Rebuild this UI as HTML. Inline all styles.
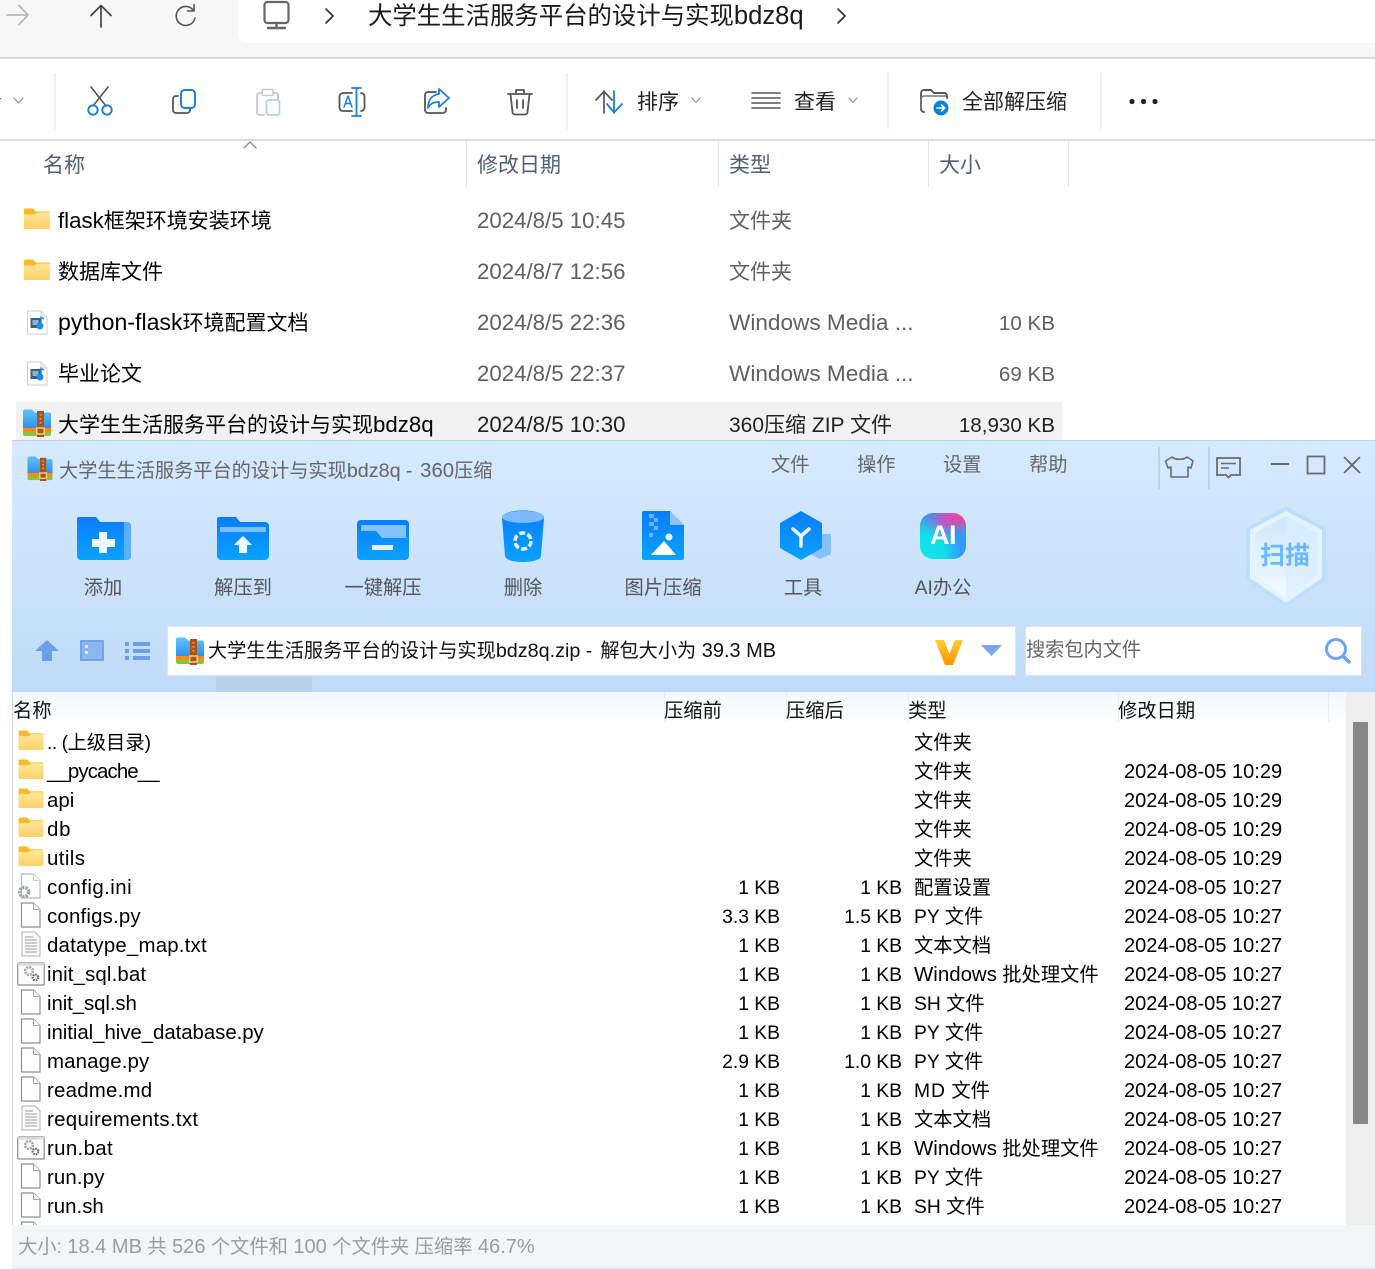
<!DOCTYPE html>
<html lang="zh-CN"><head><meta charset="utf-8"><title>360压缩</title>
<style>
html,body{margin:0;padding:0;width:1375px;height:1269px;overflow:hidden;background:#fff}
body{position:relative;font-family:"Liberation Sans","Noto Sans CJK SC",sans-serif;color:#111}
div,span{position:absolute;white-space:nowrap}
svg{position:absolute;overflow:visible}
i{font-style:normal;font-size:1.06em}
.e{height:38px;left:0;width:1100px;font-size:21px;line-height:38px}
.e span{line-height:38px;color:#606060}
.e .n{left:58px;color:#000}.e .d{left:477px;top:-1px;font-size:22.25px}.e .k{left:729px}.e .s{right:45px;font-size:20.6px}
.h{top:148px;font-size:21px;line-height:36px;color:#4f5f75}
.vs{width:1px;top:141px;height:46px;background:#e5e5e5}
.ts{top:73px;width:2px;height:56px;background:#eee}
.tb{top:85px;font-size:21px;line-height:36px;color:#222}
.lab{top:574px;font-size:19.3px;line-height:30px;color:#555;text-align:center;width:120px}
.menu{top:451px;font-size:19.3px;line-height:30px;color:#666}
.ch{top:697px;font-size:19.3px;line-height:30px;color:#111}
.cs{top:692px;width:1px;height:30px;background:#e6eff9}
.r{left:0;width:1375px;height:29px;font-size:19.3px;line-height:29px;color:#000}
.r span{line-height:29px}
.r .n{left:47px;top:-1px;font-size:20.45px}.r .a{right:595px}.r .b{right:473px}.r .k{left:914px}.r .d{left:1124px;font-size:20.05px}
</style></head>
<body>
<div style="left:0;top:0;width:1375px;height:57px;background:#f7f7f7"></div>
<div style="left:238px;top:0;width:1137px;height:43px;background:#fff;border-bottom-left-radius:8px"></div>
<div style="left:0;top:57px;width:1375px;height:2px;background:#d9d9d9"></div>
<div style="left:0;top:139px;width:1375px;height:2px;background:#dcdcdc"></div>
<span style="left:368px;top:0;font-size:24.4px;line-height:32px;color:#1a1a1a">大学生生活服务平台的设计与实现<i style="font-size:1.05em">bdz8q</i></span>

<div class="ts" style="left:54px"></div><div class="ts" style="left:566px"></div><div class="ts" style="left:887px"></div><div class="ts" style="left:1100px"></div>
<span class="tb" style="left:-40px">查看</span>
<span class="tb" style="left:637px">排序</span><span class="tb" style="left:794px">查看</span><span class="tb" style="left:962px">全部解压缩</span>

<div class="vs" style="left:466px"></div><div class="vs" style="left:718px"></div><div class="vs" style="left:928px"></div><div class="vs" style="left:1068px"></div>
<span class="h" style="left:43px">名称</span><span class="h" style="left:477px">修改日期</span><span class="h" style="left:729px">类型</span><span class="h" style="left:939px">大小</span>

<div style="left:16px;top:402px;width:1046px;height:38px;background:#f2f2f2"></div>
<div class="e" style="top:203px"><span class="n" style="top:-1px"><i>flask</i>框架环境安装环境</span><span class="d">2024/8/5 10:45</span><span class="k">文件夹</span></div>
<div class="e" style="top:254px"><span class="n">数据库文件</span><span class="d">2024/8/7 12:56</span><span class="k">文件夹</span></div>
<div class="e" style="top:305px"><span class="n" style="top:-2px"><i style="font-size:1.1em">python-flask</i>环境配置文档</span><span class="d">2024/8/5 22:36</span><span class="k" style="font-size:22.6px;top:-1px">Windows Media ...</span><span class="s">10 KB</span></div>
<div class="e" style="top:356px"><span class="n">毕业论文</span><span class="d">2024/8/5 22:37</span><span class="k" style="font-size:22.6px;top:-1px">Windows Media ...</span><span class="s">69 KB</span></div>
<div class="e" style="top:407px"><span class="n" style="top:-1px"><span style="position:static;color:#000">大学生生活服务平台的设计与实现</span><i>bdz8q</i></span><span class="d" style="color:#222">2024/8/5 10:30</span><span class="k" style="color:#222">360压缩 ZIP 文件</span><span class="s" style="color:#222">18,930 KB</span></div>

<!-- 360 window -->
<div style="left:12px;top:440px;width:1363px;height:829px;background:#fff;border-left:1px solid #c3daf3;box-sizing:border-box"></div>
<div style="left:12px;top:440px;width:1363px;height:252px;background:linear-gradient(#d6eaff,#c0dbf8);border-top:1px solid #b9d5f2;box-sizing:border-box"></div>
<div style="left:216px;top:676px;width:96px;height:16px;background:#b8d2ee"></div>
<span style="left:59px;top:456px;font-size:19.2px;line-height:30px;color:#666">大学生生活服务平台的设计与实现<i style="font-size:1.03em">bdz8q</i> <b style="font-weight:normal;letter-spacing:1.2px">- </b><i>360</i>压缩</span>
<span class="menu" style="left:771px">文件</span><span class="menu" style="left:857px">操作</span><span class="menu" style="left:943px">设置</span><span class="menu" style="left:1029px">帮助</span>
<div style="left:1158px;top:447px;width:2px;height:42px;background:#b9d3ee"></div>
<div style="left:1208px;top:447px;width:2px;height:42px;background:#b9d3ee"></div>

<span class="lab" style="left:43px">添加</span><span class="lab" style="left:183px">解压到</span><span class="lab" style="left:323px">一键解压</span><span class="lab" style="left:463px">删除</span><span class="lab" style="left:603px">图片压缩</span><span class="lab" style="left:743px">工具</span><span class="lab" style="left:883px">AI办公</span>

<div style="left:920px;top:513px;width:46px;height:46px;border-radius:13px;background:radial-gradient(circle at 8% 90%,#12e4e6 0,#12dfe8 35%,transparent 62%),radial-gradient(circle at 90% 85%,#2c9cf6 0,#2c9cf6 30%,transparent 60%),radial-gradient(circle at 90% 25%,#f0468f 0,transparent 55%),linear-gradient(120deg,#2aa0e8,#d843dc 60%,#e946b0)"></div>
<span style="left:920px;top:519px;width:46px;text-align:center;font-size:27px;line-height:32px;font-weight:bold;color:#fff;letter-spacing:-.5px">AI</span>

<svg width="1375" height="1269" style="left:0;top:0" viewBox="0 0 1375 1269">
<defs>
<linearGradient id="bl" x1="0" y1="0" x2="0" y2="1"><stop offset="0" stop-color="#0a7cfb"/><stop offset="1" stop-color="#0aa2ff"/></linearGradient>
<linearGradient id="yl" x1="0" y1="0" x2="0" y2="1"><stop offset="0" stop-color="#fee79b"/><stop offset="1" stop-color="#fdd266"/></linearGradient>
<linearGradient id="zb" x1="0" y1="0" x2="0" y2="1"><stop offset="0" stop-color="#60c4fd"/><stop offset="1" stop-color="#2f8ee6"/></linearGradient>
<linearGradient id="vv" x1="0" y1="0" x2="0" y2="1"><stop offset="0" stop-color="#ffcc33"/><stop offset="1" stop-color="#ff9300"/></linearGradient>
<linearGradient id="sh" x1="0" y1="0" x2="0" y2="1"><stop offset="0" stop-color="#cfe8fd"/><stop offset="1" stop-color="#f2faff"/></linearGradient>
<symbol id="fold" viewBox="0 0 26 21" overflow="visible"><path d="M0 2a1.500 1.500 0 0 1 1.500-1.500H9l3 3h12.500A1.500 1.500 0 0 1 26 5v14.500a1.500 1.500 0 0 1-1.500 1.500H1.500A1.500 1.500 0 0 1 0 19.500z" fill="#fab92c"/><path d="M0 6.500h10.500l2.500-2h11.500A1.500 1.500 0 0 1 26 6v13.500a1.500 1.500 0 0 1-1.500 1.500H1.500A1.500 1.500 0 0 1 0 19.500z" fill="url(#yl)"/></symbol>
<symbol id="zip" viewBox="0 0 28 28" overflow="visible"><path d="M0 2.500A2 2 0 0 1 2 .5h7l3 3h14a2 2 0 0 1 2 2V20H0z" fill="url(#zb)"/><rect x="0" y="19" width="28" height="4" fill="#ff8a12"/><path d="M0 23h28v2a2 2 0 0 1-2 2H2a2 2 0 0 1-2-2z" fill="#8ac43e"/><rect x="14" y="2" width="7" height="26" fill="#a8541a"/><rect x="16.500" y="5" width="2" height="1.600" fill="#e3a15a"/><rect x="16.500" y="9" width="2" height="1.600" fill="#e3a15a"/><rect x="16.500" y="13" width="2" height="1.600" fill="#e3a15a"/><rect x="13.800" y="19" width="7.400" height="6" fill="none" stroke="#f6d27c" stroke-width="1.500"/></symbol>
<symbol id="page" viewBox="0 0 21 26" overflow="visible"><path d="M1.500 1H13.500L20 7.500V25H1.500z" fill="#fff" stroke="#8f8f8f" stroke-width="1.200"/><path d="M13.500 1V7.500H20" fill="#fafafa" stroke="#a8a8a8" stroke-width="1"/></symbol>
<symbol id="txt" viewBox="0 0 20 26" overflow="visible"><path d="M1 1H14L19 6V25H1z" fill="#fbfbfb" stroke="#b0b0b0"/><path d="M4 6H12M4 9H16M4 12H16M4 15H16M4 18H16M4 21H16" stroke="#9a9a9a" stroke-width="1"/></symbol>
<symbol id="bat" viewBox="0 0 28 26" overflow="visible"><rect x=".7" y="1" width="26.500" height="22" rx="1" fill="#fbfbfb" stroke="#8d8d8d" stroke-width="1.200"/><rect x=".7" y="1" width="26.500" height="2.500" fill="#d8d8d8"/><circle cx="12" cy="9" r="3.800" fill="none" stroke="#a5a5a5" stroke-width="2.600" stroke-dasharray="2 1"/><circle cx="18.500" cy="15.500" r="2.800" fill="none" stroke="#6a6a6a" stroke-width="2.200" stroke-dasharray="1.700 .8"/></symbol>
<symbol id="media" viewBox="0 0 22 25" overflow="visible"><path d="M1.500 1H15L21 7V24H1.500z" fill="#fff" stroke="#cfcfcf"/><path d="M15 1V7H21" fill="#f0f0f0" stroke="#cfcfcf"/><rect x="4.500" y="8" width="10" height="10" fill="#3f5f80"/><rect x="6.500" y="10" width="6" height="5" fill="#8cb2d6"/><circle cx="14" cy="16" r="3.500" fill="#1f8ae6"/><path d="M15 15V7.500l3 1.500" stroke="#1f8ae6" stroke-width="1.500" fill="none"/></symbol>
</defs>

<!-- nav -->
<g fill="none" stroke-linecap="round" stroke-linejoin="round">
<path d="M7 16H28M19 6.500L28 16L19 25.500" stroke="#b9b9b9" stroke-width="1.700" transform="translate(0,-1)"/>
<path d="M101 27V6M91 15.500L101 5.500L111 15.500" stroke="#444" stroke-width="1.700"/>
<path d="M193.500 10.500A9.500 9.500 0 1 0 195 18" stroke="#555" stroke-width="1.600"/><path d="M194 4.500V11H187.500" stroke="#555" stroke-width="1.600"/>
<rect x="264.500" y="2" width="24" height="21" rx="3" stroke="#666" stroke-width="2.200"/><path d="M276.500 23V27M268 28H285" stroke="#666" stroke-width="2.400"/>
<path d="M326 9L333 16L326 23" stroke="#333" stroke-width="1.700"/>
<path d="M838 9L845 16L838 23" stroke="#333" stroke-width="1.700"/>
<!-- chevron indicators -->
<path d="M14 98L18.500 103L23 98M692 98L696 102.500L700 98M849 98L853 102.500L857 98" stroke="#999" stroke-width="1.300"/>
<path d="M244 148L250 142L256 148" stroke="#888" stroke-width="1.300"/>
<!-- cut -->
<path d="M91 87L106 106M108 87L93 106" stroke="#555" stroke-width="1.600"/>
<circle cx="93" cy="110" r="4.700" stroke="#1a7fd6" stroke-width="1.900"/><circle cx="107" cy="110" r="4.700" stroke="#1a7fd6" stroke-width="1.900"/>
<!-- copy -->
<path d="M178 96h-2a3 3 0 0 0-3 3v11a3 3 0 0 0 3 3h11a3 3 0 0 0 3-3v-1" stroke="#555" stroke-width="1.800"/>
<rect x="181" y="90" width="14" height="18" rx="3.500" stroke="#1a7fd6" stroke-width="1.900"/>
<!-- paste -->
<path d="M262 93h-2a3 3 0 0 0-3 3v16a3 3 0 0 0 3 3h4M274 93h2a2 2 0 0 1 2 2v4" stroke="#c8c8c8" stroke-width="1.800"/><rect x="262" y="89.500" width="11" height="6" rx="1.500" stroke="#c8c8c8" stroke-width="1.500"/>
<rect x="266.500" y="100" width="13" height="15" rx="2" stroke="#a9d2f4" stroke-width="1.700"/>
<!-- rename -->
<path d="M352 93H343a3.500 3.500 0 0 0-3.500 3.500v11a3.500 3.500 0 0 0 3.500 3.500H352M361 93a3.500 3.500 0 0 1 3.500 3.500v11a3.500 3.500 0 0 1-3.500 3.500" stroke="#555" stroke-width="1.800"/>
<path d="M356.500 88V116M352 88H361M352 116H361" stroke="#1a7fd6" stroke-width="1.800"/>
<path d="M344 107L348 96L352 107M345.500 103.500H350.500" stroke="#1a7fd6" stroke-width="1.500"/>
<!-- share -->
<path d="M436 92H428a3 3 0 0 0-3 3v15a3 3 0 0 0 3 3h15a3 3 0 0 0 3-3v-2" stroke="#555" stroke-width="1.800"/>
<path d="M439 89L449 98L439 107V102C433 102 430 104 428 108C428 100 432 95 439 94Z" stroke="#1a7fd6" stroke-width="1.800"/>
<!-- delete -->
<path d="M508 94H532M516 94V90H524V94M510.500 94L512.500 112a2.500 2.500 0 0 0 2.500 2.500H525a2.500 2.500 0 0 0 2.500-2.500L529.500 94M517 100V108M523 100V108" stroke="#555" stroke-width="1.800"/>
<!-- sort -->
<path d="M604 113V91M596 100L604 91.500L612 100" stroke="#555" stroke-width="1.700"/>
<path d="M614 91V113M607 104L614 112.500L622 104" stroke="#1a7fd6" stroke-width="1.800"/>
<!-- view -->
<path d="M752 93H780M752 98H780M752 103H780M752 108H780" stroke="#555" stroke-width="1.600"/>
<!-- extract folder -->
<path d="M924 112a3 3 0 0 1-3-3V93a3 3 0 0 1 3-3h7l3 3h10a3 3 0 0 1 3 3v2" stroke="#555" stroke-width="1.900"/>
<path d="M921 108V99a3 3 0 0 1 3-3H946" stroke="#777" stroke-width="1.400"/>
<circle cx="941" cy="108" r="7.500" fill="#0e7fd8" stroke="none"/><path d="M937 108H944M941.500 105L944.500 108L941.500 111" stroke="#fff" stroke-width="1.600"/>
</g>
<g fill="#222"><circle cx="1132" cy="101.500" r="2.600"/><circle cx="1143.500" cy="101.500" r="2.600"/><circle cx="1155" cy="101.500" r="2.600"/></g>

<!-- explorer row icons -->
<use href="#fold" x="24" y="208" width="26" height="21"/>
<use href="#fold" x="24" y="259" width="26" height="21"/>
<use href="#media" x="26" y="310" width="22" height="25"/>
<use href="#media" x="26" y="361" width="22" height="25"/>
<use href="#zip" x="23" y="409" width="28" height="28"/>

<!-- title zip -->
<use href="#zip" x="26" y="456" width="28" height="25"/>

<!-- window controls -->
<g fill="none" stroke="#6b6b6b">
<path d="M1172 457L1165.500 461L1168 468L1171 467V477H1188V467L1191 468L1193 461L1187 457C1184 460 1175 460 1172 457Z" stroke-width="1.600" stroke-linejoin="round"/>
<path d="M1217 458H1240V475H1231L1228.500 477.500L1226 475H1217Z" stroke-width="1.800"/><path d="M1221 463.500H1236M1221 468H1229" stroke-width="1.500"/>
<path d="M1271 464H1289" stroke-width="2"/>
<rect x="1307.500" y="456.500" width="17" height="17" stroke-width="1.800"/>
<path d="M1344 457L1360 473M1360 457L1344 473" stroke-width="1.900"/>
</g>

<!-- 360 toolbar icons -->
<path d="M79 517H96L100 522H127a4 4 0 0 1 4 4v30a4 4 0 0 1-4 4H81a4 4 0 0 1-4-4V519a2 2 0 0 1 2-2z" fill="url(#bl)"/>
<path d="M124 522h3a4 4 0 0 1 4 4v30a4 4 0 0 1-4 4h-3z" fill="#6fb7fb" opacity=".8"/>
<path d="M99 532H107V539H115V547H107V553H99V547H92V539H99Z" fill="#eef8ff"/>
<path d="M219 517H236L240 522H265a4 4 0 0 1 4 4v30a4 4 0 0 1-4 4H221a4 4 0 0 1-4-4V519a2 2 0 0 1 2-2z" fill="url(#bl)"/>
<rect x="220" y="527" width="46" height="5" fill="#7ac0fd"/>
<path d="M243 536L252 545H247V553H239V545H234Z" fill="#f4fbff"/>
<path d="M361 520H405a4 4 0 0 1 4 4v32a4 4 0 0 1-4 4H361a4 4 0 0 1-4-4V524a4 4 0 0 1 4-4z" fill="url(#bl)"/>
<path d="M361 525H406V538H382L376 531H361Z" fill="#82c3fd"/>
<rect x="372" y="545" width="21" height="5" fill="#dff1ff"/>
<path d="M502 518C502 508 544 508 544 518L541 556C540 564 506 564 505 556Z" fill="url(#bl)"/>
<ellipse cx="523" cy="517" rx="21" ry="6" fill="#7cbcfc"/>
<circle cx="523" cy="541" r="8" fill="none" stroke="#e2f3ff" stroke-width="3.500" stroke-dasharray="6 2.400"/>
<path d="M644 511H670L684 525V558a2 2 0 0 1-2 2H644a2 2 0 0 1-2-2V513a2 2 0 0 1 2-2z" fill="url(#bl)"/>
<path d="M670 511L684 525H670Z" fill="#8cc5fb"/>
<path d="M649 514h5v4h-5zM654 518h4v4h-4zM649 522h5v4h-5zM654 526h4v4h-4zM649 533h4v4h-4z" fill="#6ab5fb"/>
<circle cx="669" cy="537" r="3.500" fill="#e4f4ff"/>
<path d="M651 555L664 541L676 555Z" fill="#fff"/>
<path d="M811 534L831 534V554L820 559L808 553Z" fill="#86c1fb"/>
<path d="M801 511L822 523V548L801 560L780 548V523Z" fill="url(#bl)"/>
<path d="M793 529L801 536L809 529M801 536V546" fill="none" stroke="#eaf7ff" stroke-width="3.500" stroke-linecap="round"/>

<!-- shield -->
<path d="M1286 506L1326 528V580L1286 607L1246 580V528Z" fill="#b9defb" opacity=".85"/>
<path d="M1286 511L1322 530V578L1286 603L1250 578V530Z" fill="#e4f3ff"/>
<path d="M1286 516L1317 533V576L1286 598L1255 576V533Z" fill="url(#sh)"/>
<path d="M1286 516L1317 533V576L1286 598Z" fill="#d8eeff" opacity=".7"/>

<!-- nav row -->
<path d="M47 640L59 651H52V661H42V651H35Z" fill="#6c9fe9"/>
<rect x="81" y="641" width="22" height="19" fill="#8cb6ee" stroke="#6c9fe9" stroke-width="1.800"/>
<rect x="85" y="645" width="3" height="3" fill="#dbe9fa"/><rect x="85" y="651" width="3" height="3" fill="#dbe9fa"/>
<path d="M125 642h4v4h-4zM133 642h17v4h-17zM125 649h4v4h-4zM133 649h17v4h-17zM125 656h4v4h-4zM133 656h17v4h-17z" fill="#6c9fe9"/>
</svg>

<div style="left:167px;top:626px;width:849px;height:50px;background:#fff;border:1px solid #d3e4f7;box-sizing:border-box"></div>
<div style="left:1025px;top:626px;width:337px;height:50px;background:#fff;border:1px solid #d3e4f7;box-sizing:border-box"></div>
<span style="left:208px;top:636px;font-size:19.2px;line-height:30px;color:#111">大学生生活服务平台的设计与实现<i style="font-size:1.03em">bdz8q.zip</i> <b style="font-weight:normal;letter-spacing:1.4px">- </b>解包大小为<i style="font-size:1.04em"> 39.3 MB</i></span>
<span style="left:1026px;top:636px;font-size:19.2px;line-height:30px;color:#666">搜索包内文件</span>

<!-- column header -->
<div style="left:13px;top:692px;width:1333px;height:32px;background:linear-gradient(#f3f8fe,#fff)"></div>
<div class="cs" style="left:664px"></div><div class="cs" style="left:786px"></div><div class="cs" style="left:908px"></div><div class="cs" style="left:1118px"></div><div class="cs" style="left:1328px"></div>
<span class="ch" style="left:13px">名称</span><span class="ch" style="left:664px">压缩前</span><span class="ch" style="left:786px">压缩后</span><span class="ch" style="left:908px">类型</span><span class="ch" style="left:1118px">修改日期</span>

<!-- scrollbar -->
<div style="left:1346px;top:692px;width:29px;height:533px;background:#eee"></div>
<div style="left:1353px;top:722px;width:15px;height:402px;background:#888"></div>

<!-- rows -->
<div class="r" style="top:729px"><span class="n" style="font-size:19.3px;top:0"><b style="font-weight:normal;letter-spacing:-.5px">.. (</b>上级目录)</span><span class="k">文件夹</span></div>
<div class="r" style="top:758px"><span class="n" style="letter-spacing:-.9px">__pycache__</span><span class="k">文件夹</span><span class="d">2024-08-05 10:29</span></div>
<div class="r" style="top:787px"><span class="n">api</span><span class="k">文件夹</span><span class="d">2024-08-05 10:29</span></div>
<div class="r" style="top:816px"><span class="n" style="letter-spacing:.8px">db</span><span class="k">文件夹</span><span class="d">2024-08-05 10:29</span></div>
<div class="r" style="top:845px"><span class="n" style="letter-spacing:.4px">utils</span><span class="k">文件夹</span><span class="d">2024-08-05 10:29</span></div>
<div class="r" style="top:874px"><span class="n" style="letter-spacing:.44px">config.ini</span><span class="a">1 KB</span><span class="b">1 KB</span><span class="k">配置设置</span><span class="d">2024-08-05 10:27</span></div>
<div class="r" style="top:903px"><span class="n" style="letter-spacing:.18px">configs.py</span><span class="a">3.3 KB</span><span class="b">1.5 KB</span><span class="k">PY 文件</span><span class="d">2024-08-05 10:27</span></div>
<div class="r" style="top:932px"><span class="n" style="letter-spacing:.19px">datatype_map.txt</span><span class="a">1 KB</span><span class="b">1 KB</span><span class="k">文本文档</span><span class="d">2024-08-05 10:27</span></div>
<div class="r" style="top:961px"><span class="n" style="letter-spacing:.12px">init_sql.bat</span><span class="a">1 KB</span><span class="b">1 KB</span><span class="k" style="top:-1px"><i>Windows</i> 批处理文件</span><span class="d">2024-08-05 10:27</span></div>
<div class="r" style="top:990px"><span class="n" style="letter-spacing:-.1px">init_sql.sh</span><span class="a">1 KB</span><span class="b">1 KB</span><span class="k">SH 文件</span><span class="d">2024-08-05 10:27</span></div>
<div class="r" style="top:1019px"><span class="n" style="letter-spacing:-.06px">initial_hive_database.py</span><span class="a">1 KB</span><span class="b">1 KB</span><span class="k">PY 文件</span><span class="d">2024-08-05 10:27</span></div>
<div class="r" style="top:1048px"><span class="n" style="letter-spacing:.14px">manage.py</span><span class="a">2.9 KB</span><span class="b">1.0 KB</span><span class="k">PY 文件</span><span class="d">2024-08-05 10:27</span></div>
<div class="r" style="top:1077px"><span class="n" style="letter-spacing:.22px">readme.md</span><span class="a">1 KB</span><span class="b">1 KB</span><span class="k"><b style="font-weight:normal;letter-spacing:1px">MD</b> 文件</span><span class="d">2024-08-05 10:27</span></div>
<div class="r" style="top:1106px"><span class="n" style="letter-spacing:.3px">requirements.txt</span><span class="a">1 KB</span><span class="b">1 KB</span><span class="k">文本文档</span><span class="d">2024-08-05 10:27</span></div>
<div class="r" style="top:1135px"><span class="n" style="letter-spacing:.34px">run.bat</span><span class="a">1 KB</span><span class="b">1 KB</span><span class="k" style="top:-1px"><i>Windows</i> 批处理文件</span><span class="d">2024-08-05 10:27</span></div>
<div class="r" style="top:1164px"><span class="n" style="letter-spacing:.13px">run.py</span><span class="a">1 KB</span><span class="b">1 KB</span><span class="k">PY 文件</span><span class="d">2024-08-05 10:27</span></div>
<div class="r" style="top:1193px"><span class="n">run.sh</span><span class="a">1 KB</span><span class="b">1 KB</span><span class="k">SH 文件</span><span class="d">2024-08-05 10:27</span></div>

<svg width="1375" height="1269" style="left:0;top:0" viewBox="0 0 1375 1269">
<use href="#zip" x="176" y="637" width="28" height="28"/>
<use href="#fold" x="18" y="730" width="26" height="20"/>
<use href="#fold" x="18" y="759" width="26" height="20"/>
<use href="#fold" x="18" y="788" width="26" height="20"/>
<use href="#fold" x="18" y="817" width="26" height="20"/>
<use href="#fold" x="18" y="846" width="26" height="20"/>
<use href="#page" x="20" y="873" width="21" height="26" opacity=".6"/>
<circle cx="24" cy="892" r="4.500" fill="none" stroke="#9aa5ad" stroke-width="3.500" stroke-dasharray="2.200 1"/>
<use href="#page" x="20" y="902" width="21" height="26"/>
<use href="#txt" x="21" y="931" width="20" height="26"/>
<use href="#bat" x="17" y="962" width="28" height="26"/>
<use href="#page" x="20" y="989" width="21" height="26"/>
<use href="#page" x="20" y="1018" width="21" height="26"/>
<use href="#page" x="20" y="1047" width="21" height="26"/>
<use href="#page" x="20" y="1076" width="21" height="26"/>
<use href="#txt" x="21" y="1105" width="20" height="26"/>
<use href="#bat" x="17" y="1136" width="28" height="26"/>
<use href="#page" x="20" y="1163" width="21" height="26"/>
<use href="#page" x="20" y="1192" width="21" height="26"/>
<use href="#page" x="20" y="1221" width="21" height="26"/>
<!-- V logo -->
<path d="M935 640H944L949.500 654L955 640H963L953 665H945Z" fill="url(#vv)"/>
<path d="M981 645H1002L991.500 656Z" fill="#7ba7ea"/>
<g fill="none" stroke="#6fa3ec"><circle cx="1336" cy="649" r="9.500" stroke-width="3"/><path d="M1343 656L1350 663" stroke-width="3.500"/></g>
</svg>
<span style="left:1246px;top:538px;width:78px;text-align:center;font-size:25px;line-height:36px;font-weight:bold;color:#6cb8f8">扫描</span>

<!-- status bar -->
<div style="left:12px;top:1225px;width:1363px;height:43px;background:#f3f5f9"></div>
<div style="left:12px;top:1268px;width:1363px;height:1px;background:#e2e2e2"></div>
<span style="left:18px;top:1232px;font-size:19.3px;line-height:30px;color:#9c9c9c">大小: <i style="font-size:1.04em">18.4 MB</i> 共 <i style="font-size:1.04em">526</i> 个文件和 <i style="font-size:1.04em">100</i> 个文件夹 压缩率 <i style="font-size:1.04em">46.7%</i></span>
</body></html>
